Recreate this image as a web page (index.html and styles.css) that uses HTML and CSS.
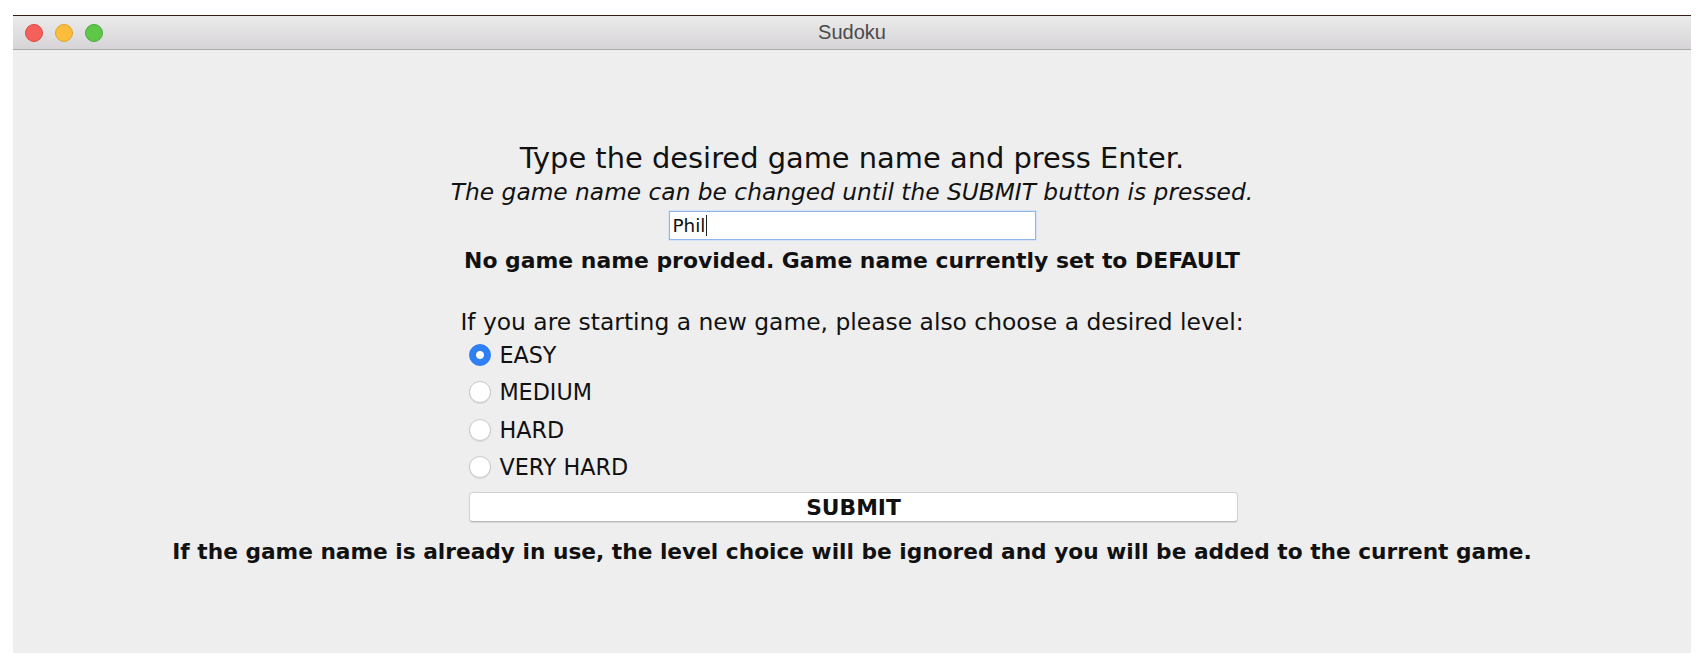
FILE: index.html
```html
<!DOCTYPE html>
<html>
<head>
<meta charset="utf-8">
<link rel="stylesheet" href="styles.css">
</head>
<body>
<div class="window">
  <div class="titlebar">
    <div class="lights">
      <span class="light red"></span>
      <span class="light yellow"></span>
      <span class="light green"></span>
    </div>
    <div class="title">Sudoku</div>
  </div>
  <div class="content">
    <div class="heading">Type the desired game name and press Enter.</div>
    <div class="subheading">The game name can be changed until the SUBMIT button is pressed.</div>
    <div class="namefield"><span class="typed">Phil</span><span class="caret"></span></div>
    <div class="status">No game name provided. Game name currently set to DEFAULT</div>
    <div class="levelpanel">
      <div class="prompt">If you are starting a new game, please also choose a desired level:</div>
      <div class="radios">
        <div class="radio"><span class="dot checked"></span><span class="label">EASY</span></div>
        <div class="radio"><span class="dot"></span><span class="label">MEDIUM</span></div>
        <div class="radio"><span class="dot"></span><span class="label">HARD</span></div>
        <div class="radio"><span class="dot"></span><span class="label">VERY HARD</span></div>
      </div>
      <div class="submit">SUBMIT</div>
    </div>
    <div class="note">If the game name is already in use, the level choice will be ignored and you will be added to the current game.</div>
  </div>
</div>
</body>
</html>
```

FILE: styles.css
```css
html, body {
  margin: 0;
  padding: 0;
  background: #ffffff;
}
body {
  padding: 15px 17px 14px 13px;
  font-family: "DejaVu Sans", sans-serif;
  color: #111;
}
.window {
  height: 637px;
  background: #eeeeee;
  border-top: 1px solid #3a1c14;
  display: flex;
  flex-direction: column;
}
.titlebar {
  height: 33px;
  background: linear-gradient(#ecebec, #d6d4d6);
  border-bottom: 1px solid #ababab;
  display: flex;
  align-items: center;
  position: relative;
  flex: none;
}
.lights {
  display: flex;
  gap: 12px;
  padding-left: 12px;
}
.light {
  width: 18px;
  height: 18px;
  border-radius: 50%;
  box-sizing: border-box;
}
.red { background: #f4605a; border: 1px solid #e2463f; }
.yellow { background: #fbbd3b; border: 1px solid #e1a32a; }
.green { background: #5ec74a; border: 1px solid #4aae37; }
.title {
  position: absolute;
  left: 0;
  right: 0;
  text-align: center;
  font-family: "Liberation Sans", sans-serif;
  font-size: 20px;
  color: #4a4a4a;
}
.content {
  flex: 1;
  display: flex;
  flex-direction: column;
  align-items: center;
  padding-top: 91px;
}
.heading {
  font-size: 28.9px;
  line-height: 34px;
}
.subheading {
  font-size: 23.3px;
  font-style: italic;
  line-height: 30px;
  margin-top: 2px;
}
.namefield {
  box-sizing: border-box;
  width: 367px;
  height: 29px;
  margin-top: 4px;
  background: #fff;
  border: 1px solid #8fb6e8;
  box-shadow: 0 0 0 1px #d5e4f6;
  display: flex;
  align-items: center;
  padding-left: 3px;
  font-size: 18.4px;
}
.caret {
  display: inline-block;
  width: 1px;
  height: 21px;
  background: #222;
  margin-left: 1px;
}
.status {
  font-size: 21.9px;
  font-weight: bold;
  margin-top: 6px;
  line-height: 30px;
}
.levelpanel {
  display: flex;
  flex-direction: column;
  align-items: flex-start;
  margin-top: 31px;
}
.prompt {
  font-size: 23.4px;
  line-height: 30px;
}
.radios {
  display: flex;
  flex-direction: column;
  padding-left: 9px;
  margin-top: -1px;
}
.radio {
  display: flex;
  align-items: center;
  gap: 8px;
  height: 37.5px;
}
.dot {
  width: 22px;
  height: 22px;
  border-radius: 50%;
  box-sizing: border-box;
  background: #fff;
  border: 1px solid #c9c9c9;
  box-shadow: 0 1px 1px rgba(0,0,0,0.08);
}
.dot.checked {
  border-color: #2c7cf2;
  background: radial-gradient(circle, #ffffff 0 3.5px, #2f7ff5 4.5px);
  box-shadow: none;
}
.label {
  font-size: 22.3px;
}
.submit {
  align-self: stretch;
  box-sizing: border-box;
  margin: 6px 6px 0 9px;
  height: 30px;
  background: #fff;
  border: 1px solid #d2d2d2;
  border-bottom-color: #b9b9b9;
  border-radius: 4px;
  box-shadow: 0 1px 1px rgba(0,0,0,0.1);
  display: flex;
  align-items: center;
  justify-content: center;
  font-size: 21.8px;
  font-weight: bold;
}
.note {
  margin-top: 15px;
  font-size: 21.7px;
  font-weight: bold;
  line-height: 30px;
}
```
